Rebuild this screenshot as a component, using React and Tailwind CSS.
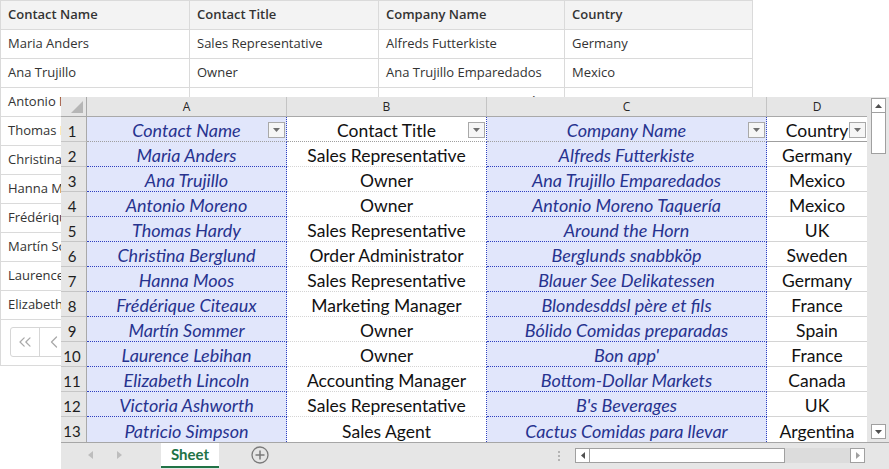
import React from "react";
import { ChevronsLeft, ChevronLeft } from "lucide-react";

const bgRows = [
  ["Maria Anders", "Sales Representative", "Alfreds Futterkiste", "Germany"],
  ["Ana Trujillo", "Owner", "Ana Trujillo Emparedados", "Mexico"],
  ["Antonio Moreno", "Owner", "Antonio Moreno Taquería", "Mexico"],
  ["Thomas Hardy", "Sales Representative", "Around the Horn", "UK"],
  ["Christina Berglund", "Order Administrator", "Berglunds snabbköp", "Sweden"],
  ["Hanna Moos", "Sales Representative", "Blauer See Delikatessen", "Germany"],
  ["Frédérique Citeaux", "Marketing Manager", "Blondesddsl père et fils", "France"],
  ["Martín Sommer", "Owner", "Bólido Comidas preparadas", "Spain"],
  ["Laurence Lebihan", "Owner", "Bon app'", "France"],
  ["Elizabeth Lincoln", "Accounting Manager", "Bottom-Dollar Markets", "Canada"],
];

const sheetRows = [
  ["Contact Name", "Contact Title", "Company Name", "Country"],
  ...bgRows,
  ["Victoria Ashworth", "Sales Representative", "B's Beverages", "UK"],
  ["Patricio Simpson", "Sales Agent", "Cactus Comidas para llevar", "Argentina"],
];

function BackgroundGrid() {
  const headers = ["Contact Name", "Contact Title", "Company Name", "Country"];
  const colCls = [
    "border-r border-[#dadada]",
    "border-r border-[#dadada]",
    "border-r border-[#dadada]",
    "",
  ];
  return (
    <div
      className="w-[753px] border border-[#dadada] bg-white text-[13px] text-[#333]"
      style={{ fontFamily: '"Open Sans", "Noto Sans", sans-serif' }}
    >
      <div className="grid grid-cols-[189px_189px_186px_187px] h-[29px] bg-[#f3f3f3] border-b border-[#dadada] font-semibold">
        {headers.map((h, i) => (
          <div key={i} className={`flex items-center pl-[7px] ${colCls[i]}`}>
            {h}
          </div>
        ))}
      </div>
      {bgRows.map((r, ri) => (
        <div
          key={ri}
          className="grid grid-cols-[189px_189px_186px_187px] h-[29px] border-b border-[#dadada]"
        >
          {r.map((c, i) => (
            <div key={i} className={`flex items-center pl-[7px] whitespace-nowrap overflow-hidden ${colCls[i]}`}>
              {c}
            </div>
          ))}
        </div>
      ))}
      <div className="h-[45px] pl-[9px] pt-[7px]">
        <div className="flex h-[30px] w-fit rounded-[3px] border border-[#d6d6d6]">
          <div className="w-[29px] flex items-center justify-center border-r border-[#d6d6d6]">
            <ChevronsLeft size={20} strokeWidth={1.5} color="#a9a9a9" />
          </div>
          <div className="w-[29px] flex items-center justify-center border-r border-[#d6d6d6]">
            <ChevronLeft size={20} strokeWidth={1.5} color="#a9a9a9" />
          </div>
          <div className="w-[29px]" />
        </div>
      </div>
    </div>
  );
}

function FilterBtn() {
  return (
    <span className="absolute right-[1px] top-[5px] w-[17px] h-[16px] border border-[#a9a9a9] bg-[#f6f6f6] flex items-center justify-center not-italic">
      <svg width="7" height="4" viewBox="0 0 7 4">
        <polygon points="0,0 7,0 3.5,4" fill="#6f6f6f" />
      </svg>
    </span>
  );
}

function Spreadsheet() {
  const letters = ["A", "B", "C", "D"];
  return (
    <div
      className="absolute left-[61px] top-[97px] w-[828px] h-[372px] flex flex-col bg-white"
      style={{ fontFamily: 'Lato, "Open Sans", sans-serif' }}
    >
      <div className="flex h-[345px]">
        <div className="grid grid-cols-[26px_200px_200px_280px_100px] grid-rows-[20px_repeat(13,25px)] w-[806px]">
          {/* corner */}
          <div className="relative bg-[#e6e6e6] border-r border-b border-[#a9a9a9]">
            <svg className="absolute right-[3px] bottom-[3px]" width="12" height="12" viewBox="0 0 12 12">
              <polygon points="12,0 12,12 0,12" fill="#b6b6b6" />
            </svg>
          </div>
          {letters.map((l, i) => (
            <div
              key={l}
              className={`bg-[#e6e6e6] border-b border-[#a9a9a9] flex items-center justify-center text-[12px] text-[#262626] ${
                i < 3 ? "border-r border-r-[#c4c4c4]" : ""
              }`}
              style={{ fontFamily: '"Open Sans", sans-serif' }}
            >
              {l}
            </div>
          ))}
          {sheetRows.map((r, ri) => {
            const isHead = ri === 0;
            const last = ri === sheetRows.length - 1;
            const blueB = last
              ? ""
              : isHead
              ? "border-b border-b-[#9f9f9f]"
              : "border-b border-dotted border-b-[#2d3fc0]";
            const whiteB = last
              ? ""
              : isHead
              ? "border-b border-b-[#9f9f9f]"
              : "border-b border-b-[#d4d4d4]";
            return (
              <React.Fragment key={ri}>
                <div
                  className={`bg-[#e6e6e6] border-r border-[#a9a9a9] ${
                    last ? "" : "border-b border-b-[#c6c6c6]"
                  } flex items-center justify-center pt-[4px] pr-[3px] text-[15px] text-[#1e1e1e]`}
                >
                  {ri + 1}
                </div>
                {r.map((c, ci) => {
                  const blue = ci === 0 || ci === 2;
                  const rightB =
                    ci < 3
                      ? "border-r border-dotted border-r-[#2d3fc0]"
                      : "";
                  const cls = blue
                    ? `bg-[#e1e6fb] italic text-[18px] text-[#27338f] ${blueB}`
                    : `bg-white text-[17.5px] text-[#111] ${whiteB}`;
                  return (
                    <div
                      key={ci}
                      className={`relative flex items-center justify-center whitespace-nowrap leading-none ${cls} ${rightB}`}
                    >
                      <span className={blue ? "relative top-[1px]" : "relative top-[2px]"}>{c}</span>
                      {isHead && <FilterBtn />}
                    </div>
                  );
                })}
              </React.Fragment>
            );
          })}
        </div>
        {/* vertical scrollbar */}
        <div className="w-[22px] bg-[#e6e6e6] flex flex-col items-center pt-[1px] pb-[3px] pl-[1px]">
          <div className="w-[15px] h-[15px] bg-white border border-[#a0a0a0] flex items-center justify-center">
            <svg width="7" height="4" viewBox="0 0 7 4">
              <polygon points="0,4 7,4 3.5,0" fill="#505050" />
            </svg>
          </div>
          <div className="w-[15px] h-[41px] bg-white border border-[#a0a0a0] border-t-0" />
          <div className="flex-1" />
          <div className="w-[15px] h-[15px] bg-white border border-[#a0a0a0] flex items-center justify-center">
            <svg width="7" height="4" viewBox="0 0 7 4">
              <polygon points="0,0 7,0 3.5,4" fill="#505050" />
            </svg>
          </div>
        </div>
      </div>
      {/* tab bar */}
      <div className="h-[27px] bg-[#e6e6e6] border-t border-[#a6a6a6] flex items-start relative">
        <div className="w-[100px] flex items-center h-[24px] pl-[27px] gap-[24px]">
          <svg width="5" height="8" viewBox="0 0 5 8">
            <polygon points="5,0 5,8 0,4" fill="#bdbdbd" />
          </svg>
          <svg width="5" height="8" viewBox="0 0 5 8">
            <polygon points="0,0 0,8 5,4" fill="#bdbdbd" />
          </svg>
        </div>
        <div className="w-[58px] h-[25px] bg-white border-b-2 border-[#217346] flex items-center justify-center text-[15px] font-bold text-[#217346]">
          Sheet
        </div>
        <div className="ml-[32px] h-[24px] flex items-center">
          <svg width="18" height="18" viewBox="0 0 18 18">
            <circle cx="9" cy="9" r="8" fill="none" stroke="#7a7a7a" strokeWidth="1.3" />
            <line x1="4.5" y1="9" x2="13.5" y2="9" stroke="#7a7a7a" strokeWidth="1.5" />
            <line x1="9" y1="4.5" x2="9" y2="13.5" stroke="#7a7a7a" strokeWidth="1.5" />
          </svg>
        </div>
        <div className="ml-[289px] h-[24px] flex flex-col justify-center gap-[2px] pt-[1px]">
          <span className="w-[2px] h-[2px] bg-[#b3b3b3]" />
          <span className="w-[2px] h-[2px] bg-[#b3b3b3]" />
          <span className="w-[2px] h-[2px] bg-[#b3b3b3]" />
        </div>
        <div className="ml-[15px] mt-[5px] flex h-[15px] w-[290px]">
          <div className="w-[15px] h-[15px] bg-white border border-[#a0a0a0] flex items-center justify-center">
            <svg width="4" height="7" viewBox="0 0 4 7">
              <polygon points="4,0 4,7 0,3.5" fill="#505050" />
            </svg>
          </div>
          <div className="w-[195px] h-[15px] bg-white border border-[#a0a0a0] border-l-0" />
          <div className="flex-1 bg-[#dcdcdc]" />
          <div className="w-[15px] h-[15px] bg-white border border-[#a0a0a0] flex items-center justify-center">
            <svg width="4" height="7" viewBox="0 0 4 7">
              <polygon points="0,0 0,7 4,3.5" fill="#a0a0a0" />
            </svg>
          </div>
        </div>
      </div>
    </div>
  );
}

export default function App() {
  return (
    <div className="relative w-[889px] h-[469px] bg-white overflow-hidden">
      <BackgroundGrid />
      <Spreadsheet />
    </div>
  );
}
